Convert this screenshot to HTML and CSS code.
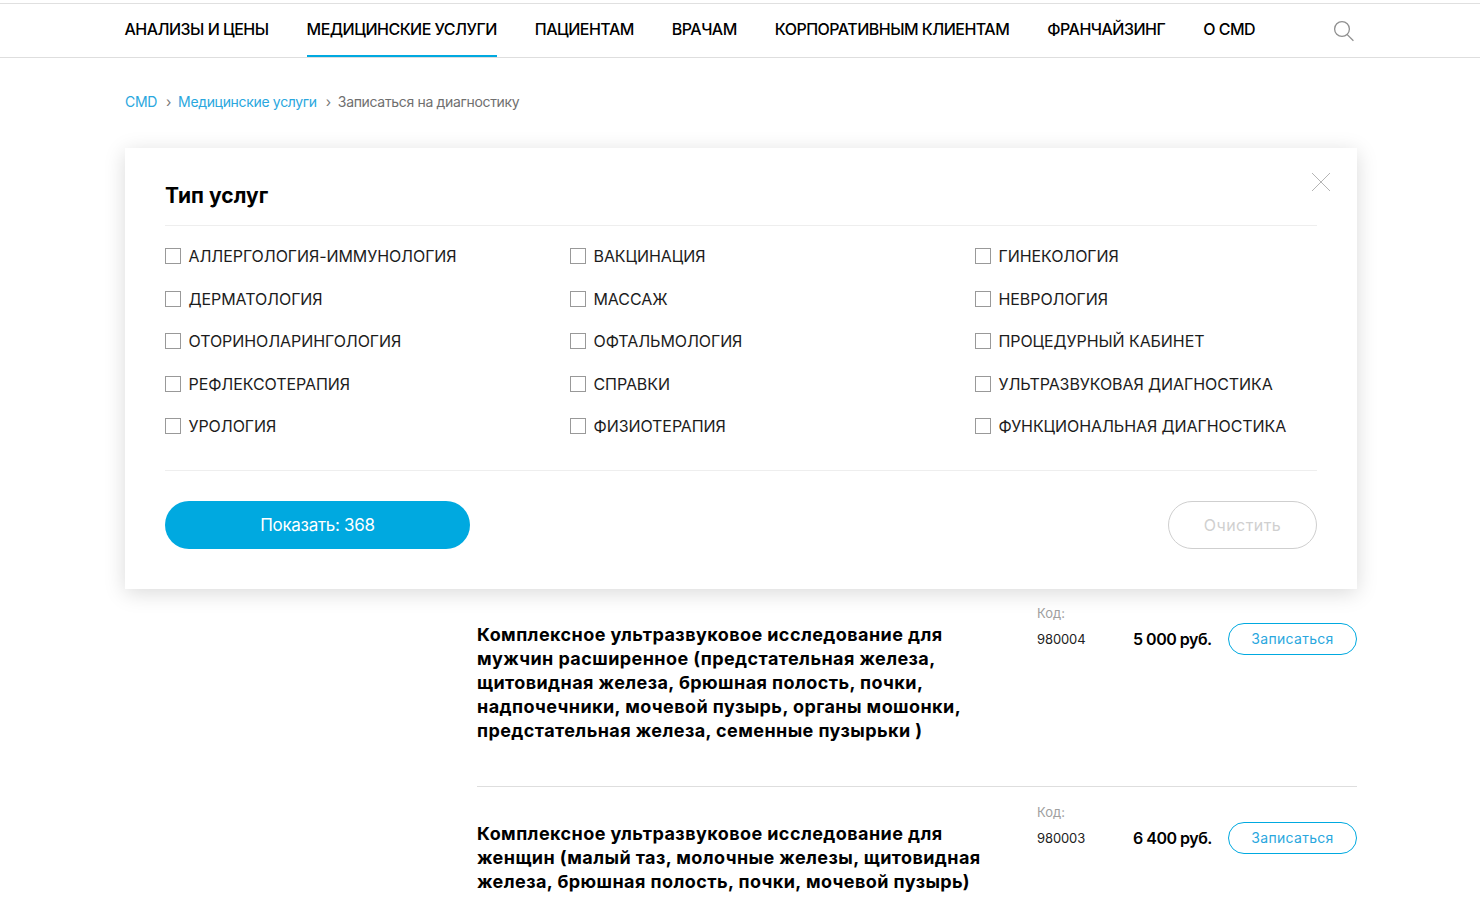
FILE: index.html
```html
<!DOCTYPE html>
<html lang="ru">
<head>
<meta charset="utf-8">
<title>Записаться на диагностику</title>
<link rel="stylesheet" href="styles.css">
</head>
<body>
<header class="header">
  <nav class="nav">
    <a class="nav-item">АНАЛИЗЫ И ЦЕНЫ</a>
    <a class="nav-item active">МЕДИЦИНСКИЕ УСЛУГИ</a>
    <a class="nav-item">ПАЦИЕНТАМ</a>
    <a class="nav-item">ВРАЧАМ</a>
    <a class="nav-item">КОРПОРАТИВНЫМ КЛИЕНТАМ</a>
    <a class="nav-item">ФРАНЧАЙЗИНГ</a>
    <a class="nav-item">О CMD</a>
    <svg class="search" width="22" height="22" viewBox="0 0 22 22" fill="none" stroke="#8f8f8f" stroke-width="1.3"><circle cx="9" cy="9" r="7.4"/><path d="M14 14.4l6.4 6.4"/></svg>
  </nav>
</header>
<main class="page">
  <div class="crumbs">
    <a class="crumb-link">CMD</a><span class="sep">›</span><a class="crumb-link">Медицинские услуги</a><span class="sep">›</span><span class="crumb-now">Записаться на диагностику</span>
  </div>
  <section class="modal">
    <svg class="close" width="20" height="20" viewBox="0 0 20 20" fill="none" stroke="#b5b5b5" stroke-width="1"><path d="M1 1l18 18M19 1L1 19"/></svg>
    <h2 class="modal-title">Тип услуг</h2>
    <div class="options">
      <label class="option"><i class="box"></i>АЛЛЕРГОЛОГИЯ-ИММУНОЛОГИЯ</label>
      <label class="option"><i class="box"></i>ВАКЦИНАЦИЯ</label>
      <label class="option"><i class="box"></i>ГИНЕКОЛОГИЯ</label>
      <label class="option"><i class="box"></i>ДЕРМАТОЛОГИЯ</label>
      <label class="option"><i class="box"></i>МАССАЖ</label>
      <label class="option"><i class="box"></i>НЕВРОЛОГИЯ</label>
      <label class="option"><i class="box"></i>ОТОРИНОЛАРИНГОЛОГИЯ</label>
      <label class="option"><i class="box"></i>ОФТАЛЬМОЛОГИЯ</label>
      <label class="option"><i class="box"></i>ПРОЦЕДУРНЫЙ КАБИНЕТ</label>
      <label class="option"><i class="box"></i>РЕФЛЕКСОТЕРАПИЯ</label>
      <label class="option"><i class="box"></i>СПРАВКИ</label>
      <label class="option"><i class="box"></i>УЛЬТРАЗВУКОВАЯ ДИАГНОСТИКА</label>
      <label class="option"><i class="box"></i>УРОЛОГИЯ</label>
      <label class="option"><i class="box"></i>ФИЗИОТЕРАПИЯ</label>
      <label class="option"><i class="box"></i>ФУНКЦИОНАЛЬНАЯ ДИАГНОСТИКА</label>
    </div>
    <div class="actions">
      <button class="btn-show">Показать: 368</button>
      <button class="btn-clear">Очистить</button>
    </div>
  </section>
  <div class="list">
    <article class="row">
      <h3 class="row-title">Комплексное ультразвуковое исследование для мужчин расширенное (предстательная железа, щитовидная железа, брюшная полость, почки, надпочечники, мочевой пузырь, органы мошонки, предстательная железа, семенные пузырьки )</h3>
      <div class="code"><div class="code-label">Код:</div><div class="code-value">980004</div></div>
      <div class="price">5 000 руб.</div>
      <button class="btn-book">Записаться</button>
    </article>
    <article class="row">
      <h3 class="row-title">Комплексное ультразвуковое исследование для женщин (малый таз, молочные железы, щитовидная железа, брюшная полость, почки, мочевой пузырь)</h3>
      <div class="code"><div class="code-label">Код:</div><div class="code-value">980003</div></div>
      <div class="price">6 400 руб.</div>
      <button class="btn-book">Записаться</button>
    </article>
  </div>
</main>
</body>
</html>
```
FILE: styles.css
```css
* { box-sizing: border-box; }
html, body { margin: 0; height: 906px; overflow: hidden; }
body { background: #fff; color: #000; font-family: Inter, "Noto Sans", sans-serif; }
button { font-family: inherit; background: none; cursor: pointer; padding: 0; }

.header { margin-top: 3px; height: 55px; border-top: 1px solid #e0e0e0; border-bottom: 1px solid #dedede; }
.nav { display: flex; align-items: stretch; height: 53px; padding-left: 124.5px; gap: 38px; position: relative; }
.nav-item { display: flex; align-items: center; height: 53px; padding-bottom: 2px; font-size: 16px; font-weight: 500; letter-spacing: -0.52px; border-bottom: 2px solid transparent; white-space: nowrap; }
.nav-item.active { border-bottom-color: #00a9e0; }
.search { margin: 16px 0 0 40px; }

.page { position: relative; width: 1232px; margin-left: 125px; padding-top: 33px; }
.crumbs { display: flex; align-items: center; height: 20px; font-size: 14px; letter-spacing: -0.33px; color: #6f6f6f; }
.crumb-link { color: #2aa7de; }
.sep { margin: 0 7px 0 9px; color: #777; font-size: 14px; }
.crumb-now { color: #6f6f6f; }

.modal { position: absolute; z-index: 2; left: 0; top: 90px; width: 1232px; height: 441px; padding: 0 40px; background: #fff; box-shadow: 0 4px 20px rgba(0, 0, 0, .15); }
.close { position: absolute; right: 26px; top: 24px; }
.modal-title { margin: 0; height: 78px; padding-top: 32px; font-size: 21px; line-height: 32px; font-weight: 700; letter-spacing: 0.05px; border-bottom: 1px solid #eeeeee; }
.options { display: grid; grid-template-columns: repeat(3, 405px); grid-auto-rows: 42.5px; height: 245px; padding-top: 9px; border-bottom: 1px solid #eeeeee; }
.option { display: flex; align-items: center; gap: 7.5px; font-size: 16px; letter-spacing: -0.08px; color: #1c1c1c; white-space: nowrap; }
.box { width: 16px; height: 16px; border: 1px solid #999; flex: none; }
.actions { display: flex; justify-content: space-between; padding-top: 30px; }
.btn-show { width: 305px; height: 48px; border: 0; border-radius: 24px; background: #00a9e0; color: #fff; font-size: 17px; letter-spacing: -0.3px; }
.btn-clear { width: 149px; height: 48px; border: 1px solid #cfcfcf; border-radius: 24px; color: #d0d0d0; font-size: 16px; letter-spacing: 0.45px; }

.list { margin: 477px 0 0 352px; }
.row { display: flex; align-items: flex-start; height: 199px; padding-top: 17px; border-bottom: 1px solid #dedede; }
.row-title { flex: none; width: 512px; margin: 0; padding-top: 18px; font-size: 18px; line-height: 24px; font-weight: 700; letter-spacing: 0.42px; }
.code { flex: none; width: 96px; margin-left: 48px; font-size: 13px; }
.code-label { color: #a0a0a0; line-height: 16px; margin-bottom: 10px; }
.code-value { line-height: 16px; letter-spacing: -0.1px; color: #222; }
.price { flex: none; width: 95px; padding-top: 22px; font-size: 16px; line-height: 24px; font-weight: 600; letter-spacing: -0.5px; white-space: nowrap; }
.btn-book { flex: none; width: 129px; height: 32px; margin-top: 18px; padding-bottom: 2px; border: 1px solid #00a9e0; border-radius: 16px; color: #2aa7de; font-size: 14px; letter-spacing: 0.3px; }
```
